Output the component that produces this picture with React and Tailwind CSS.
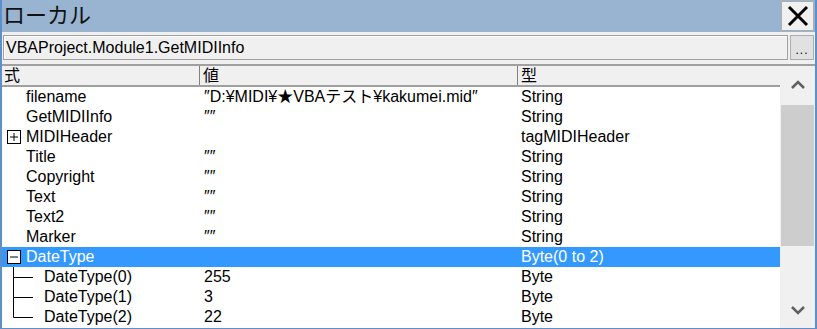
const rows = [
  { name: "filename", value: "″D:¥MIDI¥★VBAテスト¥kakumei.mid″", type: "String" },
  { name: "GetMIDIInfo", value: "″″", type: "String" },
  { name: "MIDIHeader", value: "", type: "tagMIDIHeader", box: "plus" },
  { name: "Title", value: "″″", type: "String" },
  { name: "Copyright", value: "″″", type: "String" },
  { name: "Text", value: "″″", type: "String" },
  { name: "Text2", value: "″″", type: "String" },
  { name: "Marker", value: "″″", type: "String" },
  { name: "DateType", value: "", type: "Byte(0 to 2)", box: "minus", selected: true },
  { name: "DateType(0)", value: "255", type: "Byte", child: "mid" },
  { name: "DateType(1)", value: "3", type: "Byte", child: "mid" },
  { name: "DateType(2)", value: "22", type: "Byte", child: "last" },
];

const TreeBox = ({ kind }) => (
  <svg width="14" height="14" className="shrink-0">
    <rect x="0.5" y="0.5" width="13" height="13" fill="#fff" stroke="#000" />
    <line x1="3" y1="7" x2="11" y2="7" stroke="#000" />
    {kind == "plus" ? <line x1="7" y1="3" x2="7" y2="11" stroke="#000" /> : null}
  </svg>
);

const Branch = ({ last }) => (
  <svg width="42" height="20" className="shrink-0">
    <line x1="11.5" y1="0" x2="11.5" y2={last ? 10.5 : 20} stroke="#000" />
    <line x1="11.5" y1="10.5" x2="31" y2="10.5" stroke="#000" />
  </svg>
);

const Row = ({ row }) => {
  const { name, value, type, box, selected, child } = row;
  return (
    <div
      className={
        "flex h-[20px] items-center whitespace-nowrap " +
        (selected ? "bg-[#3399ff] text-white" : "text-black")
      }
    >
      <div className="flex w-[198px] items-center">
        {child ? (
          <>
            <Branch last={child == "last"} />
            <span>{name}</span>
          </>
        ) : (
          <>
            <div className="flex w-[22px] justify-center pl-[1px]">
              {box ? <TreeBox kind={box} /> : null}
            </div>
            <span className="ml-[2px]">{name}</span>
          </>
        )}
      </div>
      <div className="w-[318px] pl-[4px]">{value}</div>
      <div className="flex-1 pl-[3px]">{type}</div>
    </div>
  );
};

const App = () => {
  return (
    <div
      className="flex h-[329px] w-[817px] flex-col overflow-hidden border-x-2 border-b border-[#5e8fcb] bg-[#f0f0f0] text-[16px] leading-none"
      style={{ fontFamily: '"Liberation Sans", "Noto Sans CJK JP", sans-serif' }}
    >
      {/* title bar */}
      <div className="flex h-[32px] shrink-0 items-center justify-between bg-[#99b4d1]">
        <span className="pl-[1px] text-[22px] text-[#111]">ローカル</span>
        <div className="mr-[1px] flex h-[30px] w-[33px] items-center justify-center border border-[#adadad] bg-[#f0f0f0]">
          <svg width="22" height="22" viewBox="0 0 22 22">
            <path d="M2 2 L20 20 M20 2 L2 20" stroke="#000" strokeWidth="3" />
          </svg>
        </div>
      </div>

      {/* context */}
      <div className="flex h-[31px] shrink-0 items-center gap-[2px] pl-[1px] pr-[1px]">
        <div className="flex h-[25px] flex-1 items-center border border-[#a0a0a0] bg-[#f0f0f0] pl-[2px] shadow-[inset_1px_1px_0_#fff]">
          VBAProject.Module1.GetMIDIInfo
        </div>
        <div className="flex h-[25px] w-[24px] items-end justify-center border border-[#adadad] bg-[#e1e1e1] pb-[3px]">
          <span className="text-[12px] tracking-[1px]">...</span>
        </div>
      </div>

      {/* grid */}
      <div className="mt-[1px] flex flex-1 border-t-2 border-[#a0a0a0] bg-white">
        <div className="flex flex-1 flex-col">
          <div className="flex h-[21px] shrink-0 items-center border-b-2 border-[#a0a0a0] bg-[#f0f0f0]">
            <div className="h-full w-[198px] border-r border-[#808080] pl-[2px] pt-[2px]">式</div>
            <div className="h-full w-[318px] border-r border-[#808080] pl-[3px] pt-[2px]">値</div>
            <div className="h-full flex-1 pl-[3px] pt-[2px]">型</div>
          </div>
          {rows.map((r) => (
            <Row key={r.name} row={r} />
          ))}
        </div>

        {/* scrollbar */}
        <div className="flex w-[35px] shrink-0 flex-col bg-[#f0f0f0]">
          <div className="flex h-[38px] items-center justify-center">
            <svg width="14" height="10" viewBox="0 0 14 10">
              <path d="M1 8 L7 2 L13 8" fill="none" stroke="#606060" strokeWidth="2.5" />
            </svg>
          </div>
          <div className="mx-[1px] mt-[1px] h-[141px] bg-[#cdcdcd]" />
          <div className="flex-1" />
          <div className="flex h-[36px] items-center justify-center">
            <svg width="14" height="10" viewBox="0 0 14 10">
              <path d="M1 2 L7 8 L13 2" fill="none" stroke="#606060" strokeWidth="2.5" />
            </svg>
          </div>
        </div>
      </div>
    </div>
  );
};

export default App;
